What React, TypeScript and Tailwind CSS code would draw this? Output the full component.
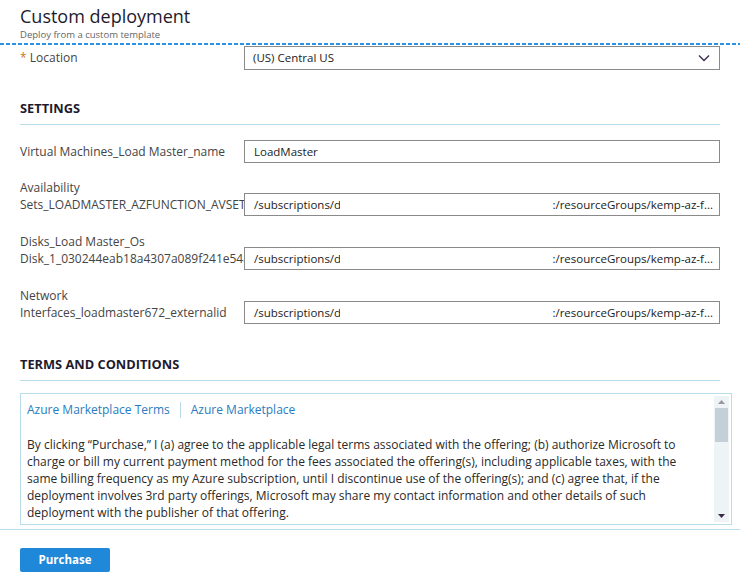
import React from "react";

const font = { fontFamily: '"Open Sans", "Noto Sans", sans-serif' };

function Field({
  label,
  sub,
  children,
}: {
  label: string;
  sub?: string;
  children: React.ReactNode;
}) {
  return (
    <div className="flex items-end">
      <div className="w-[224px] shrink-0 overflow-hidden whitespace-nowrap text-[12px] leading-[17px] text-[#444]">
        <div className={sub ? "" : "pb-[3px]"}>{label}</div>
        {sub && <div className="pb-[3px]">{sub}</div>}
      </div>
      {children}
    </div>
  );
}

function ResourceInput() {
  return (
    <div className="flex h-[23px] w-[476px] items-center justify-between border border-[#8a8a8a] pl-[9px] pr-[6px] text-[11.5px] text-[#222]">
      <span className="w-[86px] overflow-hidden whitespace-nowrap">/subscriptions/d</span>
      <span className="whitespace-nowrap">:/resourceGroups/kemp-az-f...</span>
    </div>
  );
}

export default function App() {
  return (
    <div className="h-[588px] w-[740px] overflow-hidden bg-white" style={font}>
      <div className="px-5 pt-[3px]">
        <h1 className="text-[18px] leading-[26px] text-[#1e1a2e]">Custom deployment</h1>
        <p className="text-[9.5px] leading-[12px] text-[#666]">Deploy from a custom template</p>
      </div>
      <div className="mt-[2px] h-[2px] w-full bg-[repeating-linear-gradient(90deg,#2a92e2_0_4px,transparent_4px_6px)]" />

      <div className="px-5">
        <div className="mt-[1px] flex items-center">
          <div className="w-[224px] text-[12px] text-[#444]">
            <span className="text-[#c47a1a]">*</span> Location
          </div>
          <div className="flex h-[24px] w-[476px] items-center justify-between border border-[#8a8a8a] px-[8px] text-[11.5px] text-[#222]">
            <span>(US) Central US</span>
            <svg width="12" height="8" viewBox="0 0 12 8" className="mr-[1px]">
              <path d="M1 1.5 L6 6.5 L11 1.5" fill="none" stroke="#3a2a4a" strokeWidth="1.3" />
            </svg>
          </div>
        </div>

        <h2 className="mt-[30px] text-[12.8px] font-bold leading-[17px] text-[#1e1a2e]">SETTINGS</h2>
        <div className="mt-[7px] border-t border-[#b8dce9]" />

        <div className="mt-[15px]">
          <Field label="Virtual Machines_Load Master_name">
            <div className="flex h-[23px] w-[476px] items-center border border-[#8a8a8a] px-[9px] text-[11.5px] text-[#222]">
              LoadMaster
            </div>
          </Field>
        </div>
        <div className="mt-[16px] flex flex-col gap-[17px]">
          <Field label="Availability" sub="Sets_LOADMASTER_AZFUNCTION_AVSET">
            <ResourceInput />
          </Field>
          <Field label="Disks_Load Master_Os" sub="Disk_1_030244eab18a4307a089f241e54a">
            <ResourceInput />
          </Field>
          <Field label="Network" sub="Interfaces_loadmaster672_externalid">
            <ResourceInput />
          </Field>
        </div>

        <h2 className="mt-[32px] text-[12.8px] font-bold leading-[17px] text-[#1e1a2e]">
          TERMS AND CONDITIONS
        </h2>
        <div className="mt-[7px] border-t border-[#b8dce9]" />

        <div className="mt-[12px] flex h-[132px] w-[712px] border border-[#b8dce9]">
          <div className="flex-1 pl-[6px] pr-[10px] pt-[7px]">
            <div className="flex items-center text-[12px] text-[#2a7cc0]">
              <span>Azure Marketplace Terms</span>
              <span className="mx-[10px] h-[16px] w-px bg-[#b8dce9]" />
              <span>Azure Marketplace</span>
            </div>
            <p className="mt-[17px] text-[12px] leading-[17px] text-[#2a2a2a]">
              By clicking “Purchase,” I (a) agree to the applicable legal terms associated with the
              offering; (b) authorize Microsoft to charge or bill my current payment method for the
              fees associated the offering(s), including applicable taxes, with the same billing
              frequency as my Azure subscription, until I discontinue use of the offering(s); and (c)
              agree that, if the deployment involves 3rd party offerings, Microsoft may share my
              contact information and other details of such deployment with the publisher of that
              offering.
            </p>
          </div>
          <div className="my-[2px] mr-[2px] flex w-[15px] flex-col items-center bg-[#eef3f6]">
            <svg width="9" height="12" viewBox="0 0 9 12">
              <path d="M1 8 L4.5 4 L8 8 Z" fill="#9a96a4" />
            </svg>
            <div className="h-[34px] w-[13px] bg-[#c5cfd8]" />
            <div className="flex-1" />
            <svg width="9" height="12" viewBox="0 0 9 12">
              <path d="M1 4 L4.5 8 L8 4 Z" fill="#3a2a4a" />
            </svg>
          </div>
        </div>
      </div>
      <div className="mt-[4px] border-t border-[#b8dce9]" />

      <div className="px-5 pt-[16px]">
        <button className="h-[24px] w-[90px] rounded-[2px] bg-[#1f88d8] text-[11.5px] font-bold text-white">
          Purchase
        </button>
      </div>
    </div>
  );
}
